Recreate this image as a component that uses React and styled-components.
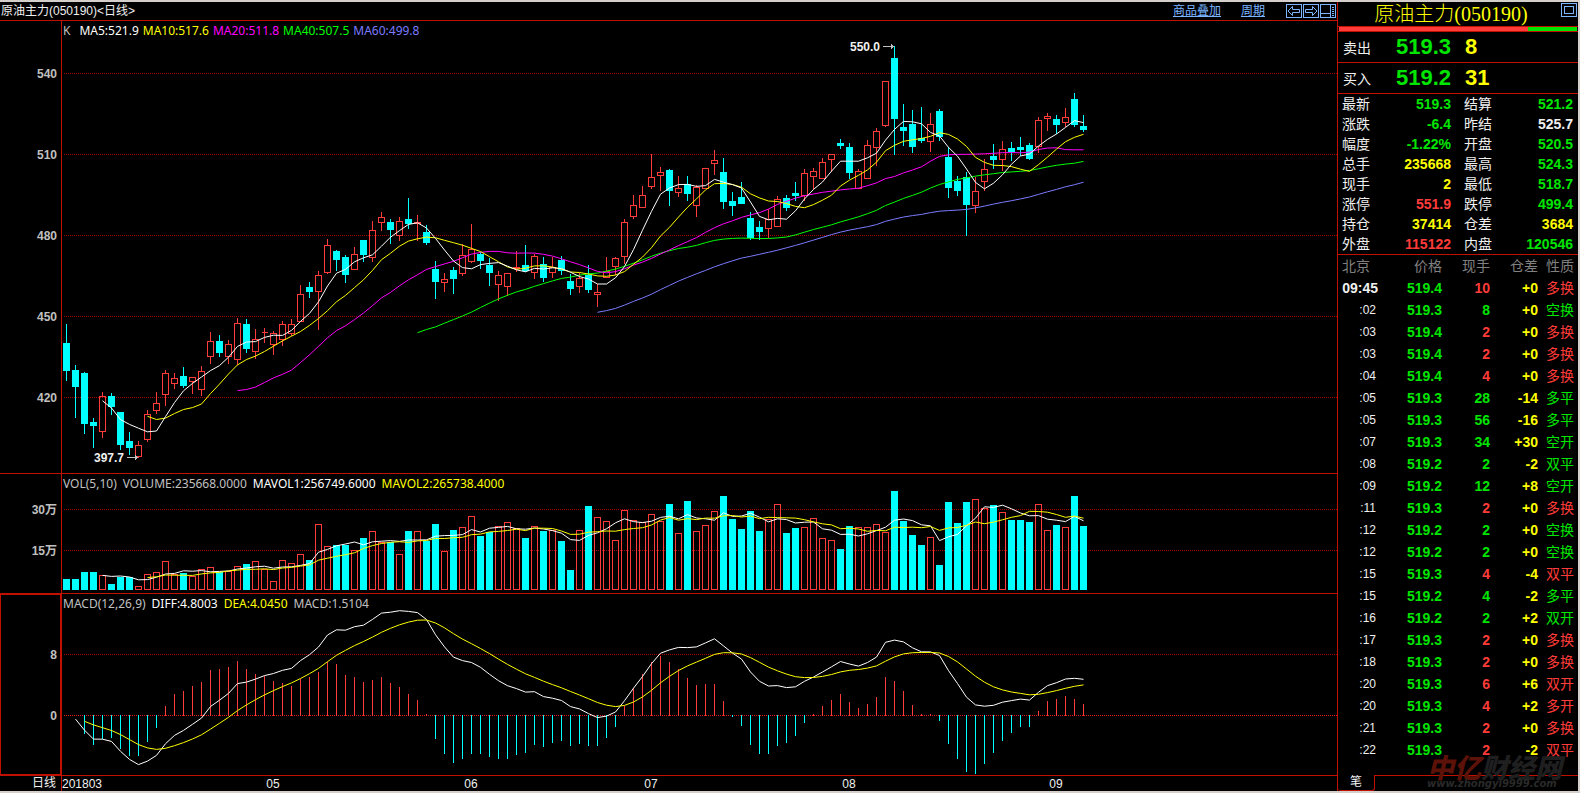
import React from "react";
import styled, { createGlobalStyle } from "styled-components";

const RED = "#ff3c39";
const CYAN = "#00ffff";
const GREEN = "#00e600";
const YELLOW = "#ffff00";
const WHITE = "#f0f0f0";
const MAGENTA = "#ff00ff";
const BLUE = "#7b7bff";
const GREY = "#c0c0c0";
const LINE = "#c01000";
const LINK = "#7bb5ff";

const sans = `"Liberation Sans", "Noto Sans CJK SC", sans-serif`;
const label = `"Noto Sans", "Noto Sans CJK SC", sans-serif`;

// chart geometry: one bar every 9px, price scale 2.7px per point
const STEP = 9;
const FIRST = 4;
const PRICE_TOP = 21;
const PRICE_UNIT = 2.7;
const MACD_UNIT = 7.6;

// up(1) / down(0), high, body top, body bottom, low, volume height * 3
const bars = [
  [0, 324, 343, 371, 381, 33], [0, 365, 370, 387, 418, 33], [0, 372, 373, 424, 434, 54],
  [0, 418, 422, 426, 448, 54], [1, 392, 396, 432, 438, 45], [0, 393, 396, 407, 415, 18],
  [0, 412, 412, 445, 450, 39], [0, 432, 441, 448, 455, 39], [1, 441, 445, 457, 458, 12],
  [1, 410, 414, 440, 442, 48], [1, 392, 403, 411, 414, 54], [1, 370, 373, 395, 406, 87],
  [1, 373, 378, 384, 389, 48], [0, 367, 376, 386, 388, 51], [1, 377, 377, 382, 394, 42],
  [1, 366, 371, 390, 396, 63], [1, 332, 341, 357, 364, 69], [0, 335, 341, 353, 357, 54],
  [1, 340, 344, 357, 364, 57], [1, 318, 323, 360, 365, 72], [0, 319, 324, 349, 353, 78],
  [1, 329, 339, 352, 359, 87], [1, 328, 332, 333, 343, 63], [1, 331, 333, 345, 355, 27],
  [1, 321, 324, 340, 346, 90], [1, 319, 324, 334, 336, 81], [1, 285, 294, 322, 322, 108],
  [0, 282, 287, 292, 298, 90], [1, 271, 275, 292, 330, 198], [1, 239, 245, 273, 274, 132],
  [0, 250, 251, 260, 271, 135], [0, 255, 257, 275, 283, 135], [1, 247, 254, 270, 270, 120],
  [0, 240, 240, 255, 262, 156], [1, 221, 230, 258, 262, 177], [1, 212, 217, 223, 231, 144],
  [0, 219, 222, 230, 244, 144], [1, 217, 221, 236, 241, 108], [0, 198, 219, 224, 229, 177],
  [1, 215, 222, 224, 241, 177], [0, 225, 232, 243, 245, 147], [0, 261, 269, 282, 299, 198],
  [1, 273, 279, 283, 292, 117], [0, 267, 270, 279, 294, 180], [1, 244, 255, 274, 276, 189],
  [1, 224, 249, 262, 263, 222], [0, 252, 254, 261, 269, 162], [0, 258, 265, 273, 286, 174],
  [1, 271, 275, 285, 301, 192], [1, 273, 273, 287, 296, 204], [1, 251, 267, 269, 272, 186],
  [0, 245, 265, 271, 272, 156], [1, 254, 256, 273, 279, 192], [0, 257, 264, 278, 282, 177],
  [1, 257, 267, 273, 278, 180], [0, 256, 260, 271, 275, 147], [0, 274, 281, 289, 295, 60],
  [1, 273, 278, 287, 293, 180], [0, 265, 275, 290, 293, 252], [1, 284, 292, 295, 307, 219],
  [1, 257, 271, 278, 278, 207], [1, 257, 258, 267, 275, 150], [1, 219, 222, 257, 264, 240],
  [1, 195, 205, 217, 219, 210], [1, 186, 195, 208, 208, 204], [1, 154, 177, 187, 189, 228],
  [1, 167, 172, 176, 191, 207], [0, 169, 170, 191, 206, 258], [1, 176, 188, 193, 197, 171],
  [0, 176, 184, 194, 201, 267], [1, 185, 187, 206, 217, 177], [1, 168, 168, 189, 189, 195],
  [1, 150, 160, 164, 175, 237], [0, 158, 172, 202, 209, 282], [0, 192, 201, 206, 216, 213],
  [0, 182, 197, 204, 204, 183], [0, 212, 218, 238, 240, 237], [0, 221, 227, 232, 240, 177],
  [1, 209, 219, 229, 238, 213], [1, 196, 199, 227, 227, 258], [0, 195, 198, 208, 211, 171],
  [0, 182, 193, 196, 201, 186], [1, 169, 173, 196, 201, 189], [1, 168, 171, 177, 189, 216],
  [1, 158, 162, 179, 179, 156], [1, 154, 154, 160, 172, 150], [0, 139, 143, 146, 149, 123],
  [0, 143, 147, 173, 179, 192], [1, 169, 171, 189, 189, 189], [1, 140, 145, 179, 179, 189],
  [1, 128, 131, 148, 166, 198], [1, 81, 81, 126, 127, 174], [0, 46, 58, 119, 155, 297],
  [0, 104, 127, 131, 146, 207], [0, 110, 124, 147, 153, 165], [0, 107, 138, 141, 143, 135],
  [1, 113, 124, 142, 152, 159], [0, 109, 111, 137, 141, 75], [0, 147, 157, 188, 198, 264],
  [0, 176, 181, 191, 196, 201], [0, 172, 177, 205, 236, 264], [1, 177, 191, 206, 213, 273],
  [1, 159, 169, 182, 191, 246], [0, 144, 156, 160, 169, 255], [1, 141, 149, 160, 171, 234],
  [0, 142, 148, 152, 161, 210], [0, 137, 147, 150, 156, 210], [0, 143, 145, 159, 160, 204],
  [1, 117, 120, 147, 153, 258], [1, 113, 116, 119, 131, 180], [0, 115, 119, 125, 134, 195],
  [1, 108, 117, 123, 127, 189], [0, 93, 99, 125, 127, 282], [0, 115, 126, 130, 132, 192],
];

const closes = bars.map(([up, , top, bottom]) => (up ? top : bottom) - PRICE_TOP);
const volumes = bars.map((b) => b[5] / 3);

const barX = (i) => FIRST + i * STEP;

function average(values, n) {
  const out = [];
  for (let i = n - 1; i < values.length; i++) {
    let sum = 0;
    for (let j = i - n + 1; j <= i; j++) sum += values[j];
    out.push([i, sum / n]);
  }
  return out;
}

function ema(values, n) {
  const out = [values[0]];
  for (let i = 1; i < values.length; i++) {
    out.push((values[i] * 2 + out[i - 1] * (n - 1)) / (n + 1));
  }
  return out;
}

const prices = closes.map((y) => -y / PRICE_UNIT);
const slow = ema(prices, 26);
const diff = ema(prices, 12).map((v, i) => v - slow[i]);
const dea = [0, ...ema(diff.slice(1), 9)];

const toPoints = (list, y) =>
  list.map(([i, v]) => `${barX(i) + 0.5},${y(v).toFixed(1)}`).join(" ");

const quotes = [
  ["最新", "519.3", GREEN, "结算", "521.2", GREEN],
  ["涨跌", "-6.4", GREEN, "昨结", "525.7", WHITE],
  ["幅度", "-1.22%", GREEN, "开盘", "520.5", GREEN],
  ["总手", "235668", YELLOW, "最高", "524.3", GREEN],
  ["现手", "2", YELLOW, "最低", "518.7", GREEN],
  ["涨停", "551.9", RED, "跌停", "499.4", GREEN],
  ["持仓", "37414", YELLOW, "仓差", "3684", YELLOW],
  ["外盘", "115122", RED, "内盘", "120546", GREEN],
];

const ticks = [
  ["09:45", "519.4", "10", "+0", "多换", RED],
  [":02", "519.3", "8", "+0", "空换", GREEN],
  [":03", "519.4", "2", "+0", "多换", RED],
  [":03", "519.4", "2", "+0", "多换", RED],
  [":04", "519.4", "4", "+0", "多换", RED],
  [":05", "519.3", "28", "-14", "多平", GREEN],
  [":05", "519.3", "56", "-16", "多平", GREEN],
  [":07", "519.3", "34", "+30", "空开", GREEN],
  [":08", "519.2", "2", "-2", "双平", GREEN],
  [":09", "519.2", "12", "+8", "空开", GREEN],
  [":11", "519.3", "2", "+0", "多换", RED],
  [":12", "519.2", "2", "+0", "空换", GREEN],
  [":12", "519.2", "2", "+0", "空换", GREEN],
  [":15", "519.3", "4", "-4", "双平", RED],
  [":15", "519.2", "4", "-2", "多平", GREEN],
  [":16", "519.2", "2", "+2", "双开", GREEN],
  [":17", "519.3", "2", "+0", "多换", RED],
  [":18", "519.3", "2", "+0", "多换", RED],
  [":20", "519.3", "6", "+6", "双开", RED],
  [":20", "519.3", "4", "+2", "多开", RED],
  [":21", "519.3", "2", "+0", "多换", RED],
  [":22", "519.3", "2", "-2", "双平", RED],
];

function GridLine({ y, bright }) {
  return (
    <line
      x1="2"
      x2="100%"
      y1={y + 0.5}
      y2={y + 0.5}
      stroke={bright ? "#e01818" : "#a00000"}
      strokeDasharray="1 1"
      shapeRendering="crispEdges"
    />
  );
}

function YAxis({ height, items, active }) {
  return (
    <Axis $active={active}>
      <svg width="100%" height={height}>
        {items.map(([text, y]) => (
          <AxisText key={text} x="57" y={y + 5} textAnchor="end">
            {text}
          </AxisText>
        ))}
      </svg>
    </Axis>
  );
}

function Legend({ items, wide }) {
  return (
    <LegendRow $wide={wide}>
      {items.map(([text, color]) => (
        <LegendItem key={text} $color={color}>
          {text}
        </LegendItem>
      ))}
    </LegendRow>
  );
}

function Arrow({ x, y }) {
  return (
    <path
      d={`M${x} ${y + 0.5}h11M${x + 8.5} ${y - 2}v5M${x + 9.5} ${y - 1}v3`}
      stroke={GREY}
      shapeRendering="crispEdges"
    />
  );
}

function PriceChart() {
  const same = (v) => v;
  return (
    <svg width="100%" height="452">
      {[52, 133, 214, 295, 376].map((y) => (
        <GridLine key={y} y={y} />
      ))}
      <g fill="none" shapeRendering="crispEdges">
        {bars.map(([up, high, top, bottom, low], i) => {
          const x = barX(i);
          const t = top - PRICE_TOP;
          const b = bottom - PRICE_TOP;
          if (up) {
            return (
              <path
                key={i}
                stroke={RED}
                d={`M${x - 2.5} ${t + 0.5}h6V${b - 0.5}h-6zM${x + 0.5} ${high - PRICE_TOP}V${t}M${x + 0.5} ${b}V${low - PRICE_TOP}`}
              />
            );
          }
          return (
            <g key={i} fill={CYAN}>
              <rect x={x} y={high - PRICE_TOP} width="1" height={low - high} />
              <rect x={x - 3} y={t} width="7" height={b - t} />
            </g>
          );
        })}
      </g>
      <g fill="none">
        <polyline points={toPoints(average(closes, 60), same)} stroke={BLUE} />
        <polyline points={toPoints(average(closes, 40), same)} stroke="#00ff00" />
        <polyline points={toPoints(average(closes, 20), same)} stroke={MAGENTA} />
        <polyline points={toPoints(average(closes, 10), same)} stroke={YELLOW} />
        <polyline points={toPoints(average(closes, 5), same)} stroke="#ffffff" />
      </g>
      <MarkText x="788" y="30">550.0</MarkText>
      <Arrow x={821} y={25} />
      <MarkText x="32" y="441">397.7</MarkText>
      <Arrow x={65} y={436} />
    </svg>
  );
}

function VolumeChart() {
  const y = (v) => 116 - v;
  return (
    <svg width="100%" height="119">
      <GridLine y={35} />
      <GridLine y={76} />
      <g fill="none" shapeRendering="crispEdges">
        {bars.map(([up], i) => {
          const h = volumes[i];
          return up ? (
            <rect key={i} x={barX(i) - 2.5} y={116.5 - h} width="6" height={h - 1} stroke={RED} />
          ) : (
            <rect key={i} x={barX(i) - 3} y={116 - h} width="7" height={h} fill={CYAN} />
          );
        })}
      </g>
      <g fill="none">
        <polyline points={toPoints(average(volumes, 5), y)} stroke="#ffffff" />
        <polyline points={toPoints(average(volumes, 10), y)} stroke={YELLOW} />
      </g>
    </svg>
  );
}

function MacdChart() {
  const zero = 121;
  const y = (v) => zero + 0.5 - v * MACD_UNIT;
  const series = (list, from) => list.map((v, i) => [i, v]).slice(from);
  return (
    <svg width="100%" height="181">
      <GridLine y={60} />
      <GridLine y={zero} bright />
      <g shapeRendering="crispEdges">
        {diff.slice(2).map((v, k) => {
          const i = k + 2;
          const h = Math.round((v - dea[i]) * 2 * MACD_UNIT);
          return (
            <rect
              key={i}
              x={barX(i)}
              y={h > 0 ? zero - h : zero}
              width="1"
              height={Math.abs(h) + 1}
              fill={h > 0 ? RED : CYAN}
            />
          );
        })}
      </g>
      <g fill="none">
        <polyline points={toPoints(series(diff, 1), y)} stroke="#ffffff" />
        <polyline points={toPoints(series(dea, 2), y)} stroke={YELLOW} />
      </g>
    </svg>
  );
}

function TimeAxis() {
  const months = [["05", 23], ["06", 45], ["07", 65], ["08", 87], ["09", 110]];
  return (
    <svg width="100%" height="15">
      <DateText x="0" y="12">201803</DateText>
      {months.map(([m, i]) => (
        <DateText key={m} x={barX(i)} y="12" textAnchor="middle">
          {m}
        </DateText>
      ))}
    </svg>
  );
}

const ICONS = {
  left: "M2 7L6.5 2.5V5.5H13.5V8.5H6.5V11.5z",
  right: "M14 7L9.5 2.5V5.5H2.5V8.5H9.5V11.5z",
  layout: "M0 9.5H10M10.5 1V13M12 3.5H14M12 5.5H14M12 7.5H14M12 9.5H14M12 11.5H14",
  restore: "M3.5 3.5H12.5V10.5H3.5z",
};

function ToolButton({ name, title }) {
  const square = name === "layout" || name === "restore";
  return (
    <IconButton type="button" aria-label={title}>
      <svg width="16" height="14" fill="none" stroke={LINK} shapeRendering={square ? "crispEdges" : "auto"}>
        <rect x="0.5" y="0.5" width="15" height="13" />
        <path d={ICONS[name]} />
      </svg>
    </IconButton>
  );
}

export default function App() {
  return (
    <>
      <GlobalStyle />
      <Window>
        <ChartSide>
          <TitleBar>
            <Title>原油主力(050190)&lt;日线&gt;</Title>
            <BarLinks>
              <BarLink href="#overlay">商品叠加</BarLink>
              <BarLink href="#period">周期</BarLink>
            </BarLinks>
            <Tools>
              <ToolButton name="left" title="上一个" />
              <ToolButton name="right" title="下一个" />
              <ToolButton name="layout" title="布局" />
            </Tools>
          </TitleBar>
          <Pane>
            <YAxis height={452} items={[["540", 52], ["510", 133], ["480", 214], ["450", 295], ["420", 376]]} />
            <Plot>
              <Legend
                items={[
                  ["K", GREY],
                  ["", GREY],
                  ["MA5:521.9", "#ffffff"],
                  ["MA10:517.6", YELLOW],
                  ["MA20:511.8", MAGENTA],
                  ["MA40:507.5", "#00ff00"],
                  ["MA60:499.8", BLUE],
                ]}
              />
              <PriceChart />
            </Plot>
          </Pane>
          <Pane>
            <YAxis height={119} items={[["30万", 35], ["15万", 76]]} />
            <Plot>
              <Legend
                wide
                items={[
                  ["VOL(5,10)", GREY],
                  ["VOLUME:235668.0000", GREY],
                  ["MAVOL1:256749.6000", "#ffffff"],
                  ["MAVOL2:265738.4000", YELLOW],
                ]}
              />
              <VolumeChart />
            </Plot>
          </Pane>
          <Pane>
            <YAxis height={181} active items={[["8", 60], ["0", 121]]} />
            <Plot>
              <Legend
                wide
                items={[
                  ["MACD(12,26,9)", GREY],
                  ["DIFF:4.8003", "#ffffff"],
                  ["DEA:4.0450", YELLOW],
                  ["MACD:1.5104", GREY],
                ]}
              />
              <MacdChart />
            </Plot>
          </Pane>
          <Pane>
            <Period>日线</Period>
            <Plot>
              <TimeAxis />
            </Plot>
          </Pane>
        </ChartSide>
        <QuoteSide>
          <QuoteTitle>
            <Name>原油主力(050190)</Name>
            <Corner>
              <ToolButton name="restore" title="还原" />
            </Corner>
          </QuoteTitle>
          <Ratio>
            <RatioPart $color={RED} $grow={189} />
            <RatioPart $color={GREEN} $grow={49} />
          </Ratio>
          <Offer>
            <QuoteLabel>卖出</QuoteLabel>
            <Big $color={GREEN}>519.3</Big>
            <Big $color={YELLOW} $left>8</Big>
          </Offer>
          <Offer>
            <QuoteLabel>买入</QuoteLabel>
            <Big $color={GREEN}>519.2</Big>
            <Big $color={YELLOW} $left>31</Big>
          </Offer>
          <QuoteGrid>
            {quotes.map(([a, av, ac, b, bv, bc]) => (
              <React.Fragment key={a}>
                <Quote>
                  <QuoteLabel>{a}</QuoteLabel>
                  <QuoteValue $color={ac}>{av}</QuoteValue>
                </Quote>
                <Quote>
                  <QuoteLabel>{b}</QuoteLabel>
                  <QuoteValue $color={bc}>{bv}</QuoteValue>
                </Quote>
              </React.Fragment>
            ))}
          </QuoteGrid>
          <TickTable>
            <colgroup>
              <col width="40" />
              <col width="64" />
              <col width="48" />
              <col width="48" />
              <col width="40" />
            </colgroup>
            <thead>
              <tr>
                <TickHead $left>北京</TickHead>
                <TickHead>价格</TickHead>
                <TickHead>现手</TickHead>
                <TickHead>仓差</TickHead>
                <TickHead $last>性质</TickHead>
              </tr>
            </thead>
            <tbody>
              {ticks.map(([time, price, hand, change, kind, color], i) => (
                <tr key={i}>
                  <TimeCell $full={i === 0}>{time}</TimeCell>
                  <TickCell $color={GREEN}>{price}</TickCell>
                  <TickCell $color={color}>{hand}</TickCell>
                  <TickCell $color={YELLOW}>{change}</TickCell>
                  <KindCell $color={color}>{kind}</KindCell>
                </tr>
              ))}
            </tbody>
          </TickTable>
          <Tabs>
            <Tab type="button">笔</Tab>
            <TabRest />
          </Tabs>
          <Watermark>
            <Brand>
              <BrandRed>中亿</BrandRed>财经网
            </Brand>
            <Site>www.zhongyi9999.com</Site>
          </Watermark>
        </QuoteSide>
      </Window>
    </>
  );
}

const GlobalStyle = createGlobalStyle`
  * {
    box-sizing: border-box;
  }
  body {
    margin: 0;
    background: #000;
    font-family: ${sans};
    font-size: 12px;
  }
  svg {
    display: block;
  }
`;

const Window = styled.div`
  display: flex;
  min-height: 100vh;
  border: solid #d4cfcb;
  border-width: 2px 2px 2px 0;
  background: #000;
  color: ${WHITE};
`;

const ChartSide = styled.main`
  flex: 1;
  min-width: 0;
`;

const TitleBar = styled.header`
  display: flex;
  align-items: center;
  height: 18px;
  padding-left: 1px;
`;

const Title = styled.h1`
  flex: 1;
  margin: 0;
  font-size: 12px;
  font-weight: normal;
  line-height: 18px;
`;

const BarLinks = styled.nav`
  display: flex;
  gap: 20px;
  margin-right: 21px;
`;

const BarLink = styled.a`
  color: ${LINK};
  line-height: 18px;
`;

const Tools = styled.div`
  display: flex;
  gap: 1px;
  margin-right: 1px;
`;

const IconButton = styled.button`
  display: block;
  padding: 0;
  border: 0;
  background: none;
  cursor: pointer;
`;

const Pane = styled.section`
  display: grid;
  grid-template-columns: 62px minmax(0, 1fr);
  border-top: 1px solid ${LINE};
`;

const Axis = styled.div`
  border-right: 1px solid ${LINE};
  box-shadow: ${(props) => (props.$active ? `inset 0 0 0 1px ${LINE}` : "none")};
`;

const AxisText = styled.text`
  fill: ${GREY};
  font-size: 12px;
  font-weight: bold;
`;

const MarkText = styled.text`
  fill: ${WHITE};
  font-size: 12px;
  font-weight: bold;
`;

const DateText = styled.text`
  fill: ${WHITE};
  font-size: 12px;
`;

const Plot = styled.div`
  position: relative;
  overflow: hidden;
`;

const LegendRow = styled.div`
  position: absolute;
  top: 0;
  left: 1px;
  display: flex;
  gap: ${(props) => (props.$wide ? "6px" : "4px")};
  font-family: ${label};
  line-height: 20px;
  white-space: nowrap;
`;

const LegendItem = styled.span`
  min-width: 1px;
  color: ${(props) => props.$color};
`;

const Period = styled.div`
  padding-right: 5px;
  border-right: 1px solid ${LINE};
  line-height: 15px;
  text-align: right;
`;

const QuoteSide = styled.aside`
  position: relative;
  display: flex;
  flex-direction: column;
  width: 241px;
  border-left: 1px solid ${LINE};
`;

const QuoteTitle = styled.div`
  position: relative;
  height: 24px;
  text-align: center;
`;

const Name = styled.h2`
  margin: 0;
  padding-right: 14px;
  color: ${YELLOW};
  font-family: "Liberation Serif", "Noto Sans CJK SC", serif;
  font-size: 20px;
  font-weight: 300;
  line-height: 24px;
`;

const Corner = styled.div`
  position: absolute;
  top: 1px;
  right: 1px;
`;

const Ratio = styled.div`
  display: flex;
  height: 6px;
  padding: 0 1px;
  border: solid ${LINE};
  border-width: 1px 0;
`;

const RatioPart = styled.div`
  flex: ${(props) => props.$grow};
  background: ${(props) => props.$color};
`;

const Offer = styled.div`
  display: grid;
  grid-template-columns: 28px 80px 1fr;
  align-items: center;
  height: 31px;
  padding: 0 5px;
  border-bottom: 1px solid ${LINE};
`;

const Big = styled.span`
  padding-left: ${(props) => (props.$left ? "14px" : "0")};
  color: ${(props) => props.$color};
  font-size: 22px;
  font-weight: bold;
  line-height: 30px;
  text-align: ${(props) => (props.$left ? "left" : "right")};
`;

const QuoteGrid = styled.div`
  display: grid;
  grid-template-columns: 109px 1fr;
  column-gap: 13px;
  padding: 0 5px 0 4px;
  border-bottom: 1px solid ${LINE};
`;

const Quote = styled.div`
  display: flex;
  justify-content: space-between;
  height: 20px;
  line-height: 20px;
`;

const QuoteLabel = styled.span`
  font-size: 14px;
`;

const QuoteValue = styled.span`
  color: ${(props) => props.$color};
  font-size: 14px;
  font-weight: bold;
`;

const TickTable = styled.table`
  width: 100%;
  border-spacing: 0;
  table-layout: fixed;
  font-size: 14px;
`;

const TickHead = styled.th`
  height: 22px;
  padding: 0 ${(props) => (props.$last ? "4px" : "0")} 0 ${(props) => (props.$left ? "4px" : "0")};
  color: #808080;
  font-weight: normal;
  line-height: 22px;
  text-align: ${(props) => (props.$left ? "left" : "right")};
`;

const TickCell = styled.td`
  height: 22px;
  padding: 0;
  color: ${(props) => props.$color};
  font-weight: bold;
  line-height: 22px;
  text-align: right;
`;

const TimeCell = styled(TickCell)`
  padding-right: ${(props) => (props.$full ? "0" : "2px")};
  font-size: ${(props) => (props.$full ? "14px" : "12px")};
  font-weight: ${(props) => (props.$full ? "bold" : "normal")};
  color: ${WHITE};
`;

const KindCell = styled(TickCell)`
  padding-right: 4px;
  font-weight: normal;
`;

const Tabs = styled.div`
  display: flex;
  height: 16px;
  margin-top: auto;
`;

const Tab = styled.button`
  width: 37px;
  padding: 0;
  border: solid ${LINE};
  border-width: 0 1px 1px 0;
  border-radius: 0 0 3px 3px;
  background: none;
  color: ${WHITE};
  font-family: ${sans};
  font-size: 12px;
  line-height: 15px;
`;

const TabRest = styled.div`
  flex: 1;
  border-top: 1px solid ${LINE};
`;

const Watermark = styled.div`
  position: absolute;
  right: 2px;
  bottom: 2px;
  width: 149px;
  pointer-events: none;
`;

const Brand = styled.div`
  color: #1f1f20;
  font-size: 27px;
  font-style: italic;
  font-weight: 900;
  line-height: 20px;
  white-space: nowrap;
`;

const BrandRed = styled.span`
  color: #5c1208;
`;

const Site = styled.div`
  color: #2a2a2a;
  font-family: "DejaVu Sans", sans-serif;
  font-size: 10px;
  font-style: italic;
  font-weight: bold;
  line-height: 10px;
`;
